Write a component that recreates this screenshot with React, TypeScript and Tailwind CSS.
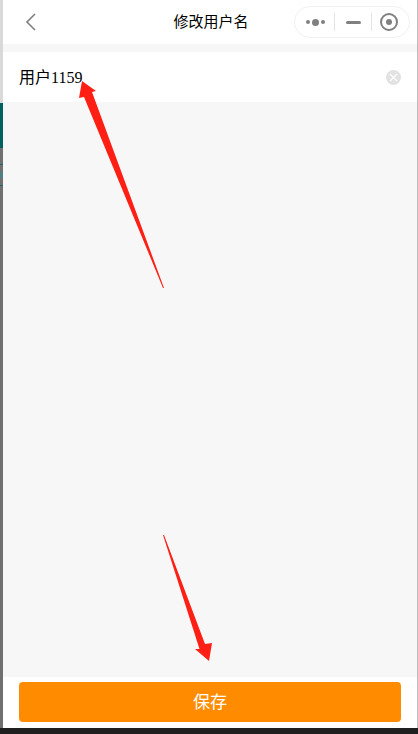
import React from 'react';

const cjk = "font-['Noto_Sans_CJK_SC',sans-serif]";

function Capsule() {
  return (
    <div className="flex h-[32px] w-[116px] items-center rounded-full border border-[#f1f1f1] bg-white">
      <div className="flex w-[39px] items-center justify-center gap-[2px] pl-[2px]">
        <span className="h-[4px] w-[4px] rounded-full bg-[#808080]" />
        <span className="h-[7px] w-[7px] rounded-full bg-[#808080]" />
        <span className="h-[4px] w-[4px] rounded-full bg-[#808080]" />
      </div>
      <div className="h-[18px] w-px bg-[#e4e4e4]" />
      <div className="flex w-[36px] items-center justify-center">
        <span className="h-[3px] w-[15px] rounded-full bg-[#808080]" />
      </div>
      <div className="h-[18px] w-px bg-[#e4e4e4]" />
      <div className="flex flex-1 items-center justify-center pr-[4px]">
        <span className="flex h-[18px] w-[18px] items-center justify-center rounded-full border-2 border-[#808080]">
          <span className="h-[6px] w-[6px] rounded-full bg-[#808080]" />
        </span>
      </div>
    </div>
  );
}

export default function App() {
  return (
    <div className="relative flex h-[734px] w-[418px] flex-col overflow-hidden bg-white">
      <div className="flex min-h-0 flex-1">
        {/* whatever is behind the phone window, left edge */}
        <div className="flex w-[3px] flex-col bg-[#707070]">
          <div className="h-[103px] bg-[#d9d9d9]" />
          <div className="h-[45px] bg-[#00625e]" />
          <div className="mt-[16px] h-px bg-[#1f6b6b]" />
          <div className="mt-[7px] h-[6px] bg-[#4f7f80]" />
          <div className="mt-[7px] h-px bg-[#1f6b6b]" />
        </div>

        <div className="flex min-w-0 flex-1 flex-col bg-[#f7f7f7]">
          <div className="relative flex h-[44px] items-center justify-center bg-white">
            <svg className="absolute left-[22px] top-[13px]" width="12" height="18" viewBox="0 0 12 18" fill="none">
              <path d="M10 1 L2 9 L10 17" stroke="#7f7f7f" strokeWidth="1.6" />
            </svg>
            <span className={`-mt-[3px] pl-[2px] text-[15px] leading-none text-black ${cjk}`}>修改用户名</span>
            <div className="absolute left-[291px] top-[6px]">
              <Capsule />
            </div>
          </div>

          <div className="mt-[8px] flex h-[50px] items-center justify-between bg-white pl-[16px] pr-[16px]">
            <span className="mt-[1px] font-['Liberation_Serif','Noto_Sans_CJK_SC',serif] text-[16px] leading-none text-black">用户1159</span>
            <span className="flex h-[15px] w-[15px] items-center justify-center rounded-full bg-[#e2e2e2]">
              <svg width="9" height="9" viewBox="0 0 9 9" fill="none">
                <path d="M1 1 L8 8 M8 1 L1 8" stroke="#ffffff" strokeWidth="1.1" />
              </svg>
            </span>
          </div>

          <div className="flex-1" />

          <div className="flex h-[51px] items-start bg-white px-[16px] pt-[5px]">
            <button className={`flex h-[40px] w-full items-center justify-center rounded-[4px] bg-[#ff8c00] pb-[3px] text-[17px] text-white ${cjk}`}>
              保存
            </button>
          </div>
        </div>

        <div className="w-px bg-[#bdbdbd]" />
      </div>

      <div className="h-[6px] bg-[#1f1f1f]" />

      {/* red annotation arrows drawn on top of the screenshot */}
      <svg className="pointer-events-none absolute left-0 top-0" width="418" height="734" viewBox="0 0 418 734">
        <polygon points="164,288 163,288 84,97 79,98 82,81 96,91 92,92" fill="#ff1f14" />
        <polygon points="163,535 164,535 205,644 212,643 209,661 195,649 199.5,649" fill="#ff1f14" />
      </svg>
    </div>
  );
}
